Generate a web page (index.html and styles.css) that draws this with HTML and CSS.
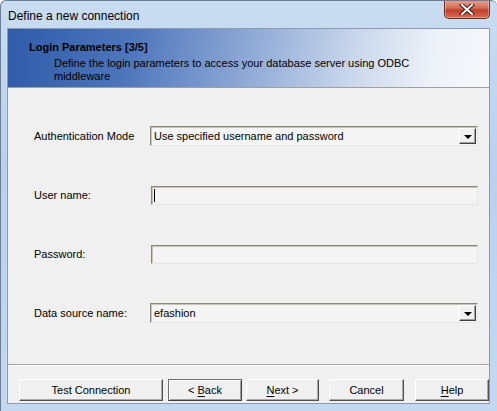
FILE: index.html
```html
<!DOCTYPE html>
<html lang="en">
<head>
  <meta charset="UTF-8">
  <title>Define a new connection</title>
  <link rel="stylesheet" href="styles.css">
</head>
<body>
  <div class="window">
    <div class="titlebar">
      <span class="title">Define a new connection</span>
      <button class="close" aria-label="Close">
        <svg width="16" height="11" viewBox="0 0 16 11">
          <path d="M3 1 L13 10 M13 1 L3 10" stroke="#3a1a1a" stroke-width="4" stroke-linecap="square"/>
          <path d="M3 1 L13 10 M13 1 L3 10" stroke="#fff" stroke-width="2" stroke-linecap="square"/>
        </svg>
      </button>
    </div>

    <div class="client">
      <div class="banner">
        <div class="step">Login Parameters [3/5]</div>
        <div class="desc">Define the login parameters to access your database server using ODBC middleware</div>
      </div>

      <div class="form">
        <label>Authentication Mode</label>
        <div class="combo">
          <span>Use specified username and password</span>
          <span class="drop"><i></i></span>
        </div>

        <label>User name:</label>
        <div class="edit"><span class="caret"></span></div>

        <label>Password:</label>
        <div class="edit"></div>

        <label>Data source name:</label>
        <div class="combo">
          <span>efashion</span>
          <span class="drop"><i></i></span>
        </div>
      </div>

      <div class="footer">
        <button class="btn test">Test Connection</button>
        <button class="btn back default">&lt; <u>B</u>ack</button>
        <button class="btn next"><u>N</u>ext &gt;</button>
        <button class="btn cancel">Cancel</button>
        <button class="btn help"><u>H</u>elp</button>
      </div>
    </div>
  </div>
</body>
</html>
```

FILE: styles.css
```css
html, body {
  margin: 0;
  padding: 0;
  background: #fff;
}
body {
  font-family: "Liberation Sans", Arial, sans-serif;
  font-size: 11px;
  color: #000;
}
.window {
  width: 497px;
  height: 411px;
  box-sizing: border-box;
  border: 1px solid #6b7d93;
  border-right: none;
  border-bottom: none;
  border-radius: 6px 6px 0 0;
  background: linear-gradient(180deg, #c9dcf1 0%, #b9d1ee 40%, #c4d8f0 100%);
  display: flex;
  flex-direction: column;
  overflow: hidden;
}
.titlebar {
  height: 27px;
  display: flex;
  align-items: flex-start;
  justify-content: space-between;
  padding-left: 7px;
  padding-right: 7px;
}
.title {
  font-size: 12px;
  margin-top: 8px;
  color: #000;
}
.close {
  width: 46px;
  height: 19px;
  margin-top: -1px;
  border: 1px solid #6a2a20;
  border-top: none;
  border-radius: 0 0 5px 5px;
  background: linear-gradient(180deg, #e8a493 0%, #d36b55 45%, #c0402a 55%, #d76a50 100%);
  box-shadow: inset 0 0 0 1px rgba(255, 255, 255, 0.35);
  display: flex;
  align-items: center;
  justify-content: center;
  padding: 0;
}
.client {
  flex: 1;
  margin: 0 7px 7px 6px;
  border: 1px solid #8b9bb0;
  background: #f0f0f0;
  display: flex;
  flex-direction: column;
}
.banner {
  height: 59px;
  box-sizing: border-box;
  padding: 12px 20px 0 21px;
  border-bottom: 1px solid #a0a0a0;
  background: linear-gradient(100deg, #2f5ba8 0%, #4d75bb 25%, #8fa9d6 50%, #cbd8ec 72%, #eef2f9 88%, #f6f8fb 100%);
}
.step {
  font-weight: bold;
  font-size: 11px;
  margin-bottom: 4px;
}
.desc {
  margin-left: 25px;
  width: 365px;
  line-height: 13px;
}
.form {
  flex: 1;
  display: grid;
  grid-template-columns: 116px 328px;
  grid-auto-rows: 20px;
  row-gap: 39px;
  align-items: center;
  padding: 38px 0 0 26px;
  border-bottom: 1px solid #a0a0a0;
  box-shadow: 0 1px 0 #fff;
}
.edit, .combo {
  height: 19px;
  box-sizing: border-box;
  border: 1px solid;
  border-color: #8a877c #e6e6e6 #e6e6e6 #8a877c;
  box-shadow: inset 1px 1px 0 #c8c4b8;
  background: #f4f4f4;
  display: flex;
  align-items: center;
  margin-left: 1px;
}
.combo {
  height: 20px;
  margin-left: 0;
  justify-content: space-between;
  padding-left: 3px;
  background: #f5f5f5;
}
.caret {
  width: 1px;
  height: 13px;
  background: #000;
  margin-left: 2px;
}
.drop {
  width: 17px;
  height: 16px;
  box-sizing: border-box;
  margin-right: 1px;
  border: 1px solid;
  border-color: #fff #404040 #404040 #fff;
  box-shadow: inset -1px -1px 0 #a0a0a0;
  background: #f0f0f0;
  display: flex;
  align-items: center;
  justify-content: center;
}
.drop i {
  width: 0;
  height: 0;
  border-left: 4px solid transparent;
  border-right: 4px solid transparent;
  border-top: 4px solid #000;
  margin-top: 1px;
}
.footer {
  height: 38px;
  display: flex;
  align-items: flex-start;
  padding: 14px 0 0 11px;
  box-sizing: border-box;
}
.btn {
  font-family: "Liberation Sans", Arial, sans-serif;
  font-size: 11px;
  height: 22px;
  box-sizing: border-box;
  border: 1px solid;
  border-color: #fff #505050 #505050 #fff;
  box-shadow: inset -1px -1px 0 #a8a8a8;
  background: #f0f0f0;
  color: #000;
  padding: 0;
}
.btn u {
  text-decoration-thickness: 1px;
  text-underline-offset: 2px;
}
.default {
  border-color: #707070 #404040 #404040 #707070;
  box-shadow: inset 1px 1px 0 #fff, inset -1px -1px 0 #a0a0a0;
}
.test { width: 144px; }
.back { width: 74px; margin-left: 5px; }
.next { width: 73px; margin-left: 4px; }
.cancel { width: 75px; margin-left: 10px; }
.help { width: 74px; margin-left: 11px; }
```
